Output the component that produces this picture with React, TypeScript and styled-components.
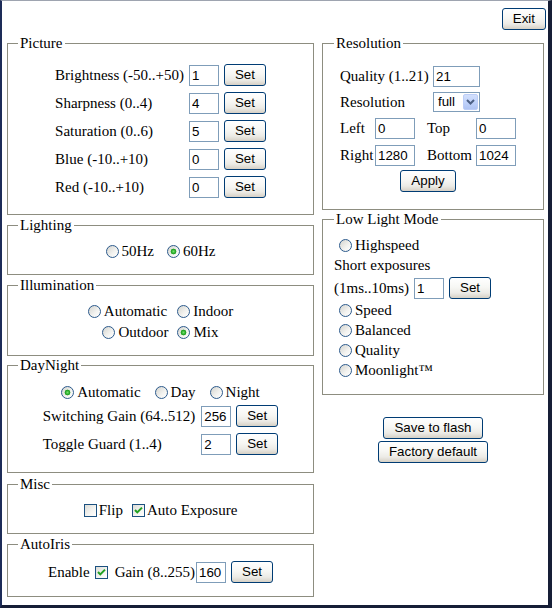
import React from 'react';
import styled, { createGlobalStyle } from 'styled-components';

const GlobalStyle = createGlobalStyle`
  html, body { margin: 0; padding: 0; background: #fff; }
  body {
    font-family: "Liberation Serif", "Times New Roman", serif;
    font-size: 15px;
    color: #000;
  }
`;

const Frame = styled.div`
  box-sizing: border-box;
  width: 552px;
  height: 608px;
  border-top: 1px solid #9ea4b0;
  border-left: 2px solid #1d2c58;
  border-right: 4px solid #161e36;
  border-bottom: 3px solid #161e36;
  padding: 0 2px 0 5px;
  display: flex;
  flex-direction: column;
  overflow: hidden;
  background: #fff;
`;

const Header = styled.div`
  display: flex;
  justify-content: flex-end;
  padding-top: 7px;
`;

const Columns = styled.div`
  display: grid;
  grid-template-columns: 307px 222px;
  column-gap: 8px;
  align-items: start;
  margin-top: 5px;
`;

const Column = styled.div`
  display: flex;
  flex-direction: column;
`;

const Group = styled.fieldset<{ $pt: number; $pb?: number; $pl?: number; $mt?: number }>`
  margin: ${(p) => p.$mt ?? 0}px 0 0 0;
  min-width: 0;
  border: 1px solid #8d8d80;
  padding: ${(p) => p.$pt}px 10px ${(p) => p.$pb ?? 13}px ${(p) => p.$pl ?? 10}px;
`;

const Legend = styled.legend`
  font-size: 15px;
  line-height: 17px;
  padding: 0 2px;
`;

const FormTable = styled.div<{ $labelGap?: number }>`
  display: grid;
  grid-template-columns: auto 30px 42px;
  column-gap: 5px;
  grid-auto-rows: 28px;
  align-items: center;
  justify-content: center;
`;

const RowLabel = styled.span<{ $pr?: number }>`
  white-space: nowrap;
  padding-right: ${(p) => p.$pr ?? 0}px;
`;

const TextInput = styled.input<{ $w: number; $ml?: number }>`
  box-sizing: border-box;
  width: ${(p) => p.$w}px;
  height: 21px;
  margin: 0 0 0 ${(p) => p.$ml ?? 0}px;
  border: 1px solid #7f9db9;
  padding: 0 2px;
  font-family: "Liberation Sans", Arial, sans-serif;
  font-size: 13.33px;
  color: #000;
  background: #fff;
  outline: none;
`;

const Button = styled.button<{ $w?: number; $ml?: number }>`
  box-sizing: border-box;
  height: 22px;
  ${(p) => (p.$w ? `width: ${p.$w}px;` : '')}
  margin: 0 0 0 ${(p) => p.$ml ?? 0}px;
  padding: 0 10px;
  border: 1px solid #003c74;
  border-radius: 3px;
  background: linear-gradient(180deg, #ffffff 0%, #f7f7f4 45%, #ecebe6 75%, #d6d0c5 100%);
  font-family: "Liberation Sans", Arial, sans-serif;
  font-size: 13.33px;
  color: #000;
  line-height: 20px;
  white-space: nowrap;
  cursor: default;
`;

const ChoiceRow = styled.div<{ $gap: number; $h?: number }>`
  display: flex;
  justify-content: center;
  align-items: center;
  gap: ${(p) => p.$gap}px;
  height: ${(p) => p.$h ?? 20}px;
`;

const Choice = styled.label<{ $gap?: number }>`
  display: inline-flex;
  align-items: center;
  gap: ${(p) => p.$gap ?? 3}px;
  white-space: nowrap;
`;

const RadioCircle = styled.span<{ $checked?: boolean }>`
  box-sizing: border-box;
  flex: none;
  width: 13px;
  height: 13px;
  border-radius: 50%;
  border: 1px solid #2c5a8c;
  background: ${(p) =>
    p.$checked
      ? 'radial-gradient(circle at 50% 50%, #6ee46a 0px, #2aa72a 2px, #21a121 2.6px, rgba(33,161,33,0) 3.2px), linear-gradient(135deg, #d4d4cf 0%, #f3f3f0 60%, #ffffff 100%)'
      : 'linear-gradient(135deg, #d4d4cf 0%, #f3f3f0 60%, #ffffff 100%)'};
`;

const CheckSquare = styled.span`
  box-sizing: border-box;
  flex: none;
  width: 13px;
  height: 13px;
  border: 1px solid #1c5180;
  background: linear-gradient(135deg, #dcdcd7 0%, #f5f5f2 60%, #ffffff 100%);
  display: flex;
  align-items: center;
  justify-content: center;
`;

const Radio: React.FC<{ label: string; checked?: boolean }> = ({ label, checked }) => (
  <Choice>
    <RadioCircle $checked={checked} />
    <span>{label}</span>
  </Choice>
);

const CheckMark = () => (
  <svg width="11" height="11" viewBox="0 0 11 11">
    <path d="M2 5 L4.3 7.4 L9 2.6" fill="none" stroke="#21a121" strokeWidth="2" />
  </svg>
);

const Check: React.FC<{ label: string; checked?: boolean }> = ({ label, checked }) => (
  <Choice $gap={2}>
    <CheckSquare>{checked && <CheckMark />}</CheckSquare>
    <span>{label}</span>
  </Choice>
);

const Stack = styled.div`
  display: flex;
  flex-direction: column;
`;

const IrisRow = styled.div`
  display: flex;
  justify-content: center;
  align-items: center;
  height: 22px;
`;

const IrisCheck = styled(CheckSquare)`
  margin: 0 7px 0 5px;
`;

const ResBlock = styled.div`
  display: flex;
  flex-direction: column;
  width: 176px;
  margin-left: 6px;
`;

const ResRow = styled.div<{ $h: number }>`
  display: flex;
  align-items: center;
  height: ${(p) => p.$h}px;
`;

const ResLabel = styled.span<{ $w: number; $pl?: number }>`
  box-sizing: border-box;
  width: ${(p) => p.$w}px;
  padding-left: ${(p) => p.$pl ?? 0}px;
  white-space: nowrap;
`;

const CenterRow = styled.div<{ $h: number }>`
  display: flex;
  justify-content: center;
  align-items: center;
  height: ${(p) => p.$h}px;
`;

const Select = styled.div`
  box-sizing: border-box;
  width: 47px;
  height: 20px;
  border: 1px solid #7f9db9;
  padding: 1px;
  display: flex;
  align-items: stretch;
  background: #fff;
`;

const SelectText = styled.span`
  flex: 1;
  padding-left: 3px;
  font-family: "Liberation Sans", Arial, sans-serif;
  font-size: 13.33px;
  line-height: 16px;
`;

const SelectButton = styled.span`
  box-sizing: border-box;
  width: 15px;
  border: 1px solid #bccdf7;
  border-radius: 2px;
  background: linear-gradient(180deg, #d2dffc 0%, #c1d3fb 50%, #afc4f3 100%);
  display: flex;
  align-items: center;
  justify-content: center;
`;

const LowRow = styled.div<{ $h: number; $pl?: number }>`
  display: flex;
  align-items: center;
  height: ${(p) => p.$h}px;
  padding-left: ${(p) => p.$pl ?? 0}px;
  white-space: nowrap;
`;

const ActionStack = styled.div`
  display: flex;
  flex-direction: column;
  align-items: center;
  gap: 2px;
  margin-top: 22px;
`;

const pictureRows: [string, string][] = [
  ['Brightness (-50..+50)', '1'],
  ['Sharpness (0..4)', '4'],
  ['Saturation (0..6)', '5'],
  ['Blue (-10..+10)', '0'],
  ['Red (-10..+10)', '0'],
];

export default function App() {
  return (
    <>
      <GlobalStyle />
      <Frame>
        <Header>
          <Button>Exit</Button>
        </Header>
        <Columns>
          <Column>
            <Group $pt={9}>
              <Legend>Picture</Legend>
              <FormTable>
                {pictureRows.map(([label, value]) => (
                  <React.Fragment key={label}>
                    <RowLabel>{label}</RowLabel>
                    <TextInput $w={30} defaultValue={value} />
                    <Button $w={42}>Set</Button>
                  </React.Fragment>
                ))}
              </FormTable>
            </Group>

            <Group $pt={7} $mt={2}>
              <Legend>Lighting</Legend>
              <ChoiceRow $gap={13}>
                <Radio label="50Hz" />
                <Radio label="60Hz" checked />
              </ChoiceRow>
            </Group>

            <Group $pt={7} $mt={2}>
              <Legend>Illumination</Legend>
              <Stack>
                <ChoiceRow $gap={10} $h={21}>
                  <Radio label="Automatic" />
                  <Radio label="Indoor" />
                </ChoiceRow>
                <ChoiceRow $gap={9} $h={20}>
                  <Radio label="Outdoor" />
                  <Radio label="Mix" checked />
                </ChoiceRow>
              </Stack>
            </Group>

            <Group $pt={8} $pb={14} $mt={1}>
              <Legend>DayNight</Legend>
              <ChoiceRow $gap={14}>
                <Radio label="Automatic" checked />
                <Radio label="Day" />
                <Radio label="Night" />
              </ChoiceRow>
              <FormTable>
                <RowLabel $pr={1}>Switching Gain (64..512)</RowLabel>
                <TextInput $w={30} defaultValue="256" />
                <Button $w={42}>Set</Button>
                <RowLabel $pr={1}>Toggle Guard (1..4)</RowLabel>
                <TextInput $w={30} defaultValue="2" />
                <Button $w={42}>Set</Button>
              </FormTable>
            </Group>

            <Group $pt={7} $mt={3}>
              <Legend>Misc</Legend>
              <ChoiceRow $gap={9}>
                <Check label="Flip" />
                <Check label="Auto Exposure" checked />
              </ChoiceRow>
            </Group>

            <Group $pt={8} $mt={2}>
              <Legend>AutoIris</Legend>
              <IrisRow>
                <span>Enable</span>
                <IrisCheck>
                  <CheckMark />
                </IrisCheck>
                <span>Gain (8..255)</span>
                <TextInput $w={30} $ml={1} defaultValue="160" />
                <Button $w={42} $ml={5}>Set</Button>
              </IrisRow>
            </Group>
          </Column>

          <Column>
            <Group $pt={12} $pb={15} $pl={11}>
              <Legend>Resolution</Legend>
              <ResBlock>
                <ResRow $h={25}>
                  <ResLabel $w={93}>Quality (1..21)</ResLabel>
                  <TextInput $w={47} defaultValue="21" />
                </ResRow>
                <ResRow $h={26}>
                  <ResLabel $w={93}>Resolution</ResLabel>
                  <Select>
                    <SelectText>full</SelectText>
                    <SelectButton>
                      <svg width="9" height="6" viewBox="0 0 9 6">
                        <path d="M1 1 L4.5 4.5 L8 1" fill="none" stroke="#4d6185" strokeWidth="2" />
                      </svg>
                    </SelectButton>
                  </Select>
                </ResRow>
                <ResRow $h={27}>
                  <ResLabel $w={35}>Left</ResLabel>
                  <TextInput $w={40} defaultValue="0" />
                  <ResLabel $w={61} $pl={12}>Top</ResLabel>
                  <TextInput $w={40} defaultValue="0" />
                </ResRow>
                <ResRow $h={26}>
                  <ResLabel $w={35}>Right</ResLabel>
                  <TextInput $w={40} defaultValue="1280" />
                  <ResLabel $w={61} $pl={12}>Bottom</ResLabel>
                  <TextInput $w={40} defaultValue="1024" />
                </ResRow>
                <CenterRow $h={26}>
                  <Button>Apply</Button>
                </CenterRow>
              </ResBlock>
            </Group>

            <Group $pt={7} $pb={14} $pl={11} $mt={1}>
              <Legend>Low Light Mode</Legend>
              <LowRow $h={20} $pl={5}>
                <Radio label="Highspeed" />
              </LowRow>
              <LowRow $h={21}>Short exposures</LowRow>
              <LowRow $h={24}>
                <span>(1ms..10ms)</span>
                <TextInput $w={30} $ml={5} defaultValue="1" />
                <Button $w={42} $ml={5}>Set</Button>
              </LowRow>
              <LowRow $h={20} $pl={5}>
                <Radio label="Speed" />
              </LowRow>
              <LowRow $h={20} $pl={5}>
                <Radio label="Balanced" />
              </LowRow>
              <LowRow $h={20} $pl={5}>
                <Radio label="Quality" />
              </LowRow>
              <LowRow $h={20} $pl={5}>
                <Radio label="Moonlight™" />
              </LowRow>
            </Group>

            <ActionStack>
              <Button>Save to flash</Button>
              <Button>Factory default</Button>
            </ActionStack>
          </Column>
        </Columns>
      </Frame>
    </>
  );
}
